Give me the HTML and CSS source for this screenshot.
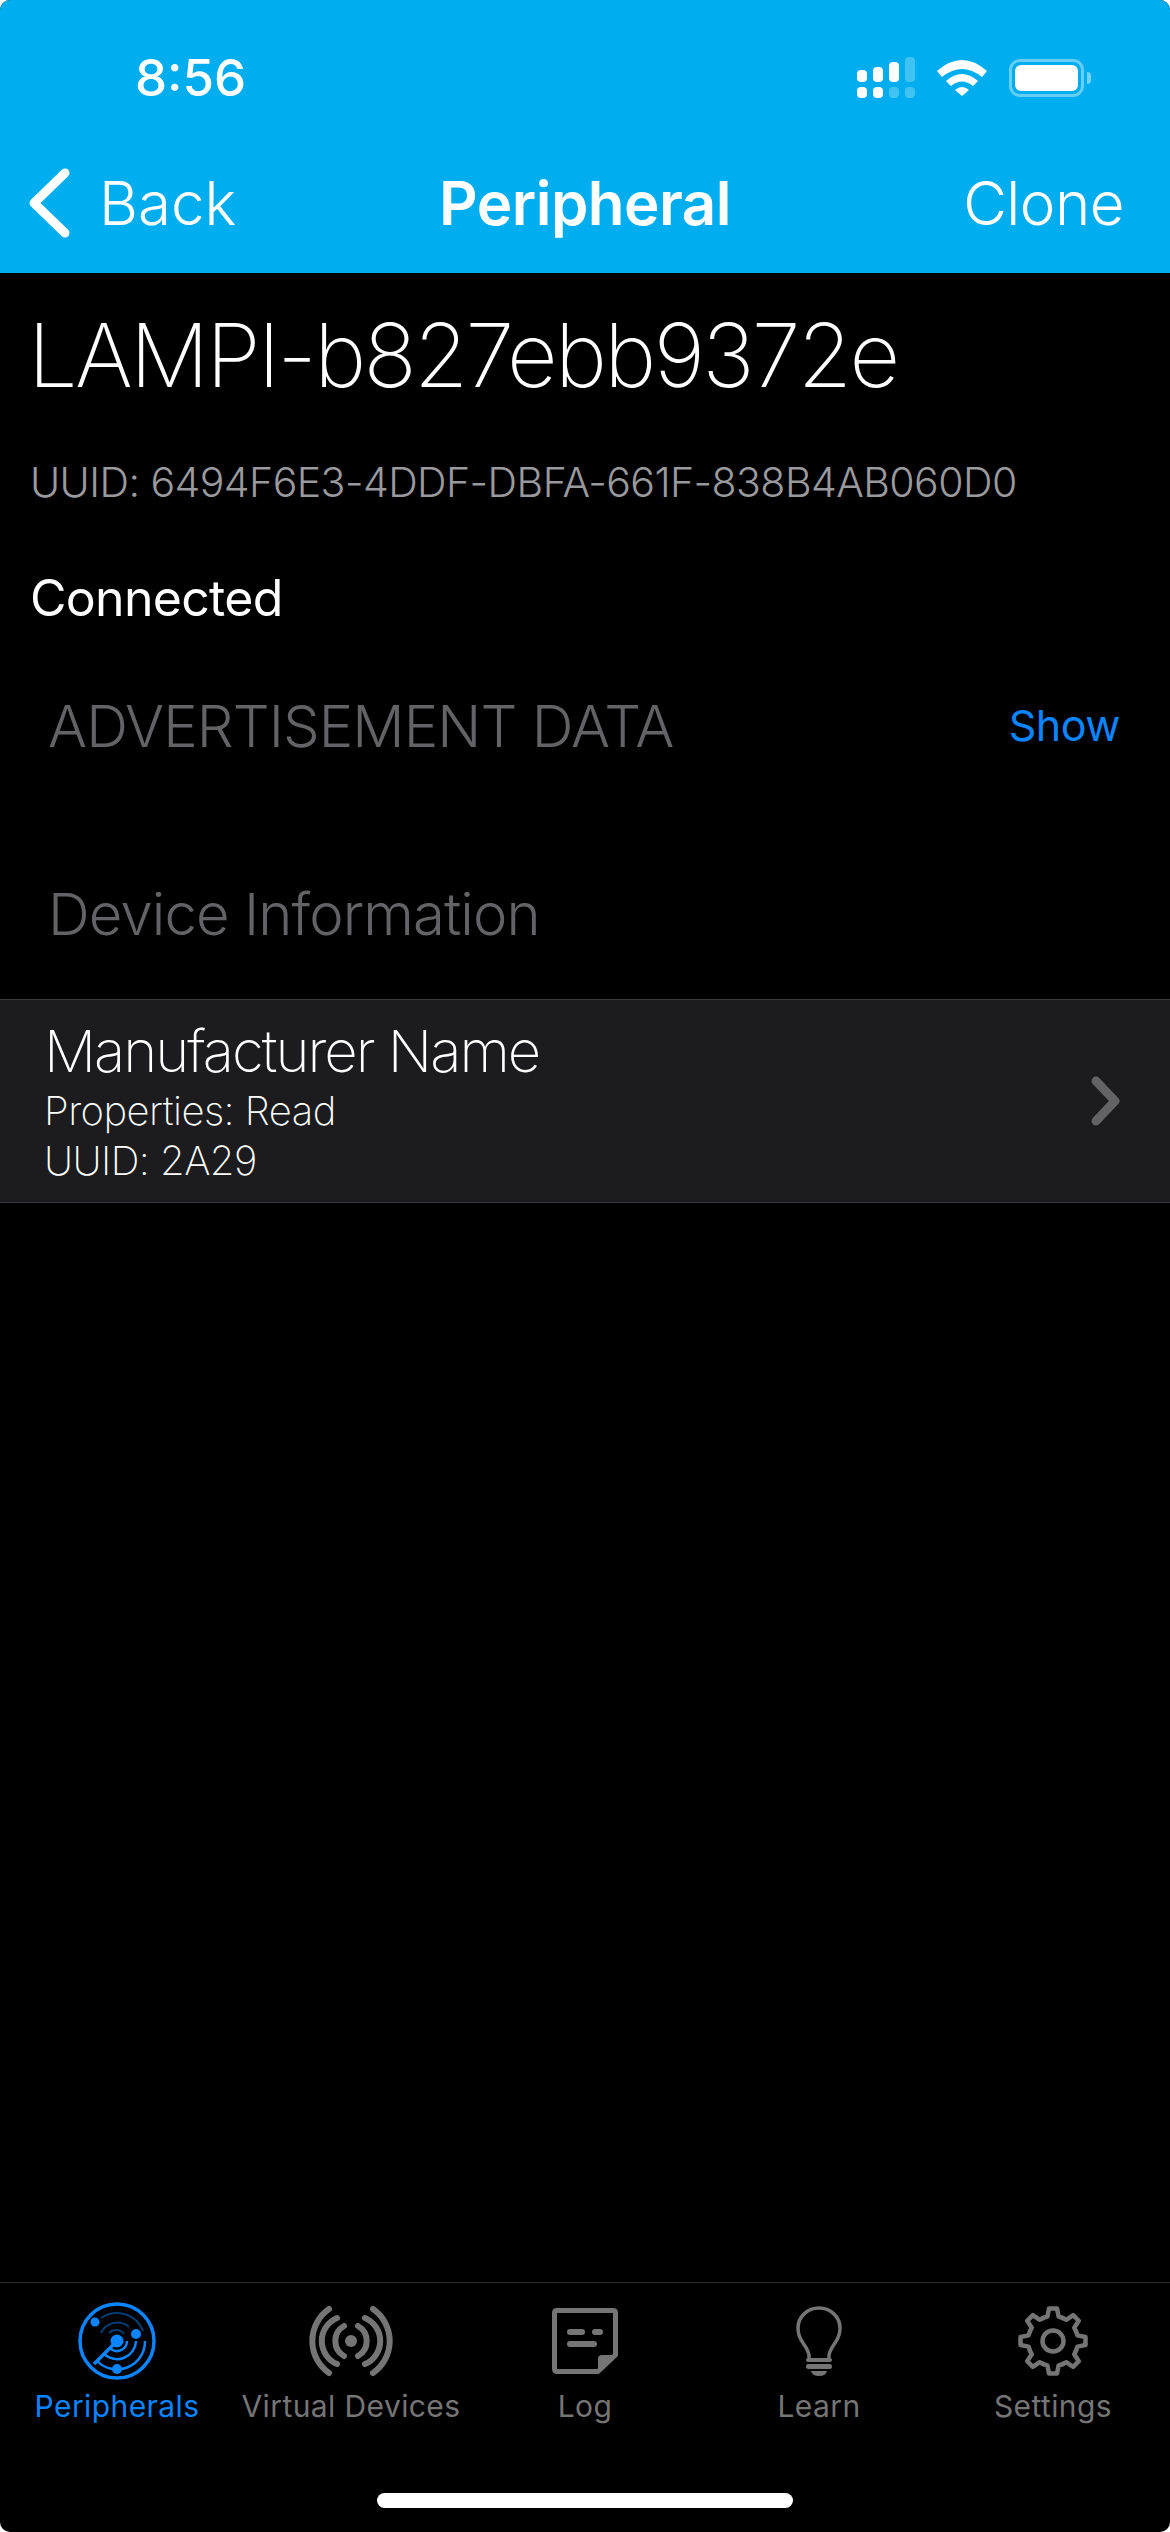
FILE: index.html
```html
<!DOCTYPE html>
<html>

<head>
    <meta charset="utf-8">
    <title>Peripheral</title>
    <link rel="stylesheet" href="styles.css">
</head>

<body>
    <div class="screen">
        <header class="top">
            <div class="statusBar">
                <span class="clock">8:56</span>
                <div class="statusIcons">
                    <svg class="signal" width="58" height="42" viewBox="0 0 58 42">
                        <rect x="0" y="13" width="10" height="12" rx="4" fill="#fff" />
                        <rect x="16" y="10" width="10" height="15" rx="4" fill="#fff" />
                        <rect x="32" y="5" width="10" height="20" rx="4" fill="#fff" />
                        <rect x="48" y="0" width="10" height="25" rx="4" fill="#fff" fill-opacity=".25" />
                        <rect x="0" y="30" width="10" height="11" rx="4" fill="#fff" />
                        <rect x="16" y="30" width="10" height="11" rx="4" fill="#fff" />
                        <rect x="32" y="30" width="10" height="11" rx="4" fill="#fff" fill-opacity=".25" />
                        <rect x="48" y="30" width="10" height="11" rx="4" fill="#fff" fill-opacity=".25" />
                    </svg>
                    <svg class="wifi" width="50" height="38" viewBox="0 0 50 38">
                        <path d="M0 12 Q25 -10 50 12 L45 18 Q25 2 5 18 Z" fill="#fff" />
                        <path d="M9 22 Q25 8 41 22 L36 27 Q25 18 14 27 Z" fill="#fff" />
                        <path d="M18 31 Q25 25 32 31 L25 37 Z" fill="#fff" />
                    </svg>
                    <div class="battery">
                        <div class="batteryBody"><div class="batteryFill"></div></div>
                        <div class="batteryCap"></div>
                    </div>
                </div>
            </div>
            <nav class="navBar">
                <div class="navBack">
                    <svg width="42" height="72" viewBox="0 0 42 72">
                        <path d="M36 6 L5 36 L36 66" fill="none" stroke="#fff" stroke-width="9" stroke-linecap="round" stroke-linejoin="round" />
                    </svg>
                    <span>Back</span>
                </div>
                <span class="navTitle">Peripheral</span>
                <span class="navClone">Clone</span>
            </nav>
        </header>

        <main class="content">
            <h1 class="deviceName">LAMPI-b827ebb9372e</h1>
            <p class="deviceUuid">UUID: 6494F6E3-4DDF-DBFA-661F-838B4AB060D0</p>
            <p class="deviceState">Connected</p>
            <div class="sectionHead">
                <span class="sectionLabel">ADVERTISEMENT DATA</span>
                <span class="showLink">Show</span>
            </div>
            <div class="sectionLabel serviceName">Device Information</div>
            <div class="charRow">
                <div class="charText">
                    <div class="charName">Manufacturer Name</div>
                    <div class="charMeta">Properties: Read</div>
                    <div class="charMeta">UUID: 2A29</div>
                </div>
                <svg width="30" height="50" viewBox="0 0 30 50">
                    <path d="M6 5 L25 25 L6 45" fill="none" stroke="#636366" stroke-width="9" stroke-linecap="round" stroke-linejoin="round" />
                </svg>
            </div>
        </main>

        <footer class="tabBar">
            <div class="tab tabActive">
                <svg width="80" height="80" viewBox="0 0 80 80" fill="none" stroke="#0a84ff">
                    <circle cx="40" cy="40" r="37" stroke-width="3.5" />
                    <path d="M40 40 L17 63" stroke-width="3.5" />
                    <circle cx="40" cy="40" r="6.5" fill="#0a84ff" stroke="none" />
                    <circle cx="40" cy="68" r="5" fill="#0a84ff" stroke="none" />
                    <circle cx="59" cy="33" r="5" fill="#0a84ff" stroke="none" />
                    <circle cx="18" cy="21" r="4.5" fill="#0a84ff" stroke="none" />
                    <path d="M20 60 A28 28 0 0 0 68 40" stroke-width="2.5" />
                    <path d="M27 53 A19 19 0 0 0 59 40" stroke-width="2.5" />
                    <path d="M34 48 A10 10 0 0 0 50 40" stroke-width="2.5" />
                    <path d="M24 17 A28 28 0 0 1 66 30" stroke-width="2" stroke-opacity=".45" />
                    <path d="M24 32 A18 18 0 0 1 52 26" stroke-width="2" stroke-opacity=".45" />
                    <path d="M32 32 A10 10 0 0 1 47 33" stroke-width="2" stroke-opacity=".45" />
                </svg>
                <span>Peripherals</span>
            </div>
            <div class="tab">
                <svg width="84" height="80" viewBox="0 -5 84 80" fill="none" stroke="#757575" stroke-width="6" stroke-linecap="round">
                    <circle cx="42" cy="35" r="6" fill="#757575" stroke="none" />
                    <path d="M35 20 A17.3 17.3 0 0 0 35 50" />
                    <path d="M49 20 A17.3 17.3 0 0 1 49 50" />
                    <path d="M28 12 A25 25 0 0 0 28 58" />
                    <path d="M56 12 A25 25 0 0 1 56 58" />
                    <path d="M20 3 A39 39 0 0 0 20 67" />
                    <path d="M64 3 A39 39 0 0 1 64 67" />
                </svg>
                <span>Virtual Devices</span>
            </div>
            <div class="tab">
                <svg width="66" height="80" viewBox="0 -7 66 80">
                    <path d="M5 2.5 H61 Q63.5 2.5 63.5 5 V47 L46 63.5 H5 Q2.5 63.5 2.5 61 V5 Q2.5 2.5 5 2.5 Z" fill="none" stroke="#757575" stroke-width="5" stroke-linejoin="round" />
                    <path d="M65 47 H50 Q46 47 46 51 V65 Z" fill="#757575" />
                    <rect x="15" y="21" width="18" height="6" rx="3" fill="#757575" />
                    <rect x="40" y="21" width="11" height="6" rx="3" fill="#757575" />
                    <rect x="15" y="33" width="30" height="6" rx="3" fill="#757575" />
                </svg>
                <span>Log</span>
            </div>
            <div class="tab">
                <svg width="46" height="80" viewBox="0 -5 46 80">
                    <path d="M13 52 V49 Q12 44 7 37 Q2 30 2 22 A21 20 0 0 1 44 22 Q44 30 39 37 Q34 44 33 49 V52" fill="none" stroke="#757575" stroke-width="3.5" stroke-linejoin="round" />
                    <rect x="10" y="52" width="26" height="4" rx="2" fill="#757575" />
                    <rect x="10" y="58" width="26" height="5" rx="2.5" fill="#757575" />
                    <path d="M15 65 H31 Q30 70 23 70 Q16 70 15 65 Z" fill="#757575" />
                </svg>
                <span>Learn</span>
            </div>
            <div class="tab">
                <svg width="72" height="80" viewBox="-36 -40 72 80" fill="none" stroke="#757575" stroke-width="4.5" stroke-linecap="round" stroke-linejoin="round">
                    <path id="gearTooth" d="M-9.6 -23.1 L-5.6 -24.4 L-4 -32.5 L4 -32.5 L5.6 -24.4 L9.6 -23.1" />
                    <use href="#gearTooth" transform="rotate(45)" />
                    <use href="#gearTooth" transform="rotate(90)" />
                    <use href="#gearTooth" transform="rotate(135)" />
                    <use href="#gearTooth" transform="rotate(180)" />
                    <use href="#gearTooth" transform="rotate(225)" />
                    <use href="#gearTooth" transform="rotate(270)" />
                    <use href="#gearTooth" transform="rotate(315)" />
                    <circle cx="0" cy="0" r="10.5" />
                </svg>
                <span>Settings</span>
            </div>
        </footer>
        <div class="homeArea"><div class="homeBar"></div></div>
    </div>
</body>

</html>
```
FILE: styles.css
```css
* {
    box-sizing: border-box;
}

html,
body {
    margin: 0;
    padding: 0;
    background: #fff;
}

body {
    font-family: Inter, "Liberation Sans", sans-serif;
    color: #fff;
}

.screen {
    width: 1170px;
    height: 2532px;
    display: flex;
    flex-direction: column;
    background: #000;
    overflow: hidden;
    border-radius: 10px;
}

.top {
    height: 273px;
    background: #00aeef;
}

.statusBar {
    height: 132px;
    padding: 53px 79px 0 135px;
    display: flex;
    justify-content: space-between;
    align-items: flex-start;
}

.clock {
    font-size: 51px;
    line-height: 50px;
    font-weight: 500;
}

.statusIcons {
    display: flex;
    align-items: center;
    gap: 22px;
    margin-top: 4px;
}

.battery {
    display: flex;
    align-items: center;
    gap: 3px;
}

.batteryBody {
    width: 75px;
    height: 38px;
    border: 3px solid rgba(255, 255, 255, .4);
    border-radius: 11px;
    padding: 3px;
}

.batteryFill {
    height: 100%;
    background: #fff;
    border-radius: 6px;
}

.batteryCap {
    width: 4px;
    height: 12px;
    background: rgba(255, 255, 255, .45);
    border-radius: 0 4px 4px 0;
}

.navBar {
    height: 141px;
    display: grid;
    grid-template-columns: 1fr auto 1fr;
    align-items: center;
    font-size: 60px;
    font-weight: 300;
}

.navBack {
    display: flex;
    align-items: center;
    gap: 28px;
    padding-left: 29px;
}

.navTitle {
    font-weight: 600;
    letter-spacing: -.5px;
}

.navClone {
    justify-self: end;
    padding-right: 46px;
    letter-spacing: -.5px;
}

.deviceName {
    margin: 32px 0 0 28px;
    font-size: 88px;
    line-height: 100px;
    font-weight: 200;
    letter-spacing: -2.7px;
}

.deviceUuid {
    margin: 54px 0 0 30px;
    font-size: 41px;
    line-height: 46px;
    letter-spacing: -.55px;
    color: #9a9a9e;
    font-weight: 350;
}

.deviceState {
    margin: 68px 0 0 30px;
    font-size: 50px;
    line-height: 50px;
    letter-spacing: -.7px;
}

.sectionHead {
    margin-top: 70px;
    padding: 0 50px 0 48px;
    display: flex;
    justify-content: space-between;
    align-items: center;
}

.sectionLabel {
    font-size: 58px;
    line-height: 66px;
    letter-spacing: -.9px;
    color: #636366;
    font-weight: 350;
}

.showLink {
    font-size: 43px;
    letter-spacing: -.5px;
    color: #0a84ff;
    margin-top: -2px;
}

.serviceName {
    margin: 122px 0 0 48px;
}

.charRow {
    margin-top: 52px;
    height: 204px;
    background: #1c1c1e;
    border-top: 1px solid #3a3a3c;
    border-bottom: 1px solid #3a3a3c;
    display: flex;
    align-items: center;
    justify-content: space-between;
    padding: 0 50px 0 44px;
}

.charName {
    font-size: 58px;
    line-height: 69px;
    font-weight: 150;
    letter-spacing: -2px;
}

.charMeta {
    font-size: 40px;
    line-height: 50px;
    font-weight: 150;
    letter-spacing: -.55px;
}

.content {
    flex: 1;
}

.tabBar {
    height: 178px;
    border-top: 1px solid #2c2c2e;
    display: grid;
    grid-template-columns: repeat(5, 234px);
    padding-top: 18px;
}

.tab {
    display: flex;
    flex-direction: column;
    align-items: center;
    font-size: 30px;
    letter-spacing: .4px;
    color: #757575;
    gap: 7px;
}

.tabActive {
    color: #0a84ff;
}

.homeArea {
    height: 72px;
    padding-top: 33px;
}

.homeBar {
    width: 416px;
    height: 15px;
    margin: 0 auto;
    background: #fff;
    border-radius: 8px;
}
```
